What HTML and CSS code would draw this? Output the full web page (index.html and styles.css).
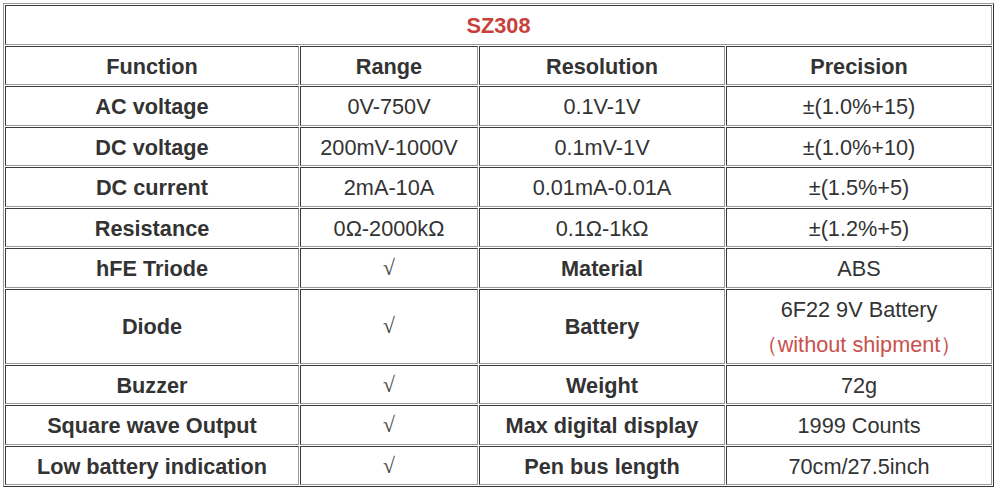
FILE: index.html
```html
<!DOCTYPE html>
<html>
<head>
<meta charset="utf-8">
<link rel="stylesheet" href="styles.css">
</head>
<body>
<table class="spec">
  <colgroup>
    <col class="c1"><col class="c2"><col class="c3"><col class="c4">
  </colgroup>
  <tr><td colspan="4" class="title">SZ308</td></tr>
  <tr><td class="b">Function</td><td class="b">Range</td><td class="b">Resolution</td><td class="b">Precision</td></tr>
  <tr><td class="b">AC voltage</td><td>0V-750V</td><td>0.1V-1V</td><td>±(1.0%+15)</td></tr>
  <tr><td class="b">DC voltage</td><td>200mV-1000V</td><td>0.1mV-1V</td><td>±(1.0%+10)</td></tr>
  <tr><td class="b">DC current</td><td>2mA-10A</td><td>0.01mA-0.01A</td><td>±(1.5%+5)</td></tr>
  <tr><td class="b">Resistance</td><td>0Ω-2000kΩ</td><td>0.1Ω-1kΩ</td><td>±(1.2%+5)</td></tr>
  <tr><td class="b">hFE Triode</td><td class="chk">√</td><td class="b">Material</td><td>ABS</td></tr>
  <tr><td class="b">Diode</td><td class="chk">√</td><td class="b">Battery</td><td>6F22 9V Battery<br><span class="red">（without shipment）</span></td></tr>
  <tr><td class="b">Buzzer</td><td class="chk">√</td><td class="b">Weight</td><td>72g</td></tr>
  <tr><td class="b">Square wave Output</td><td class="chk">√</td><td class="b">Max digital display</td><td>1999 Counts</td></tr>
  <tr><td class="b">Low battery indication</td><td class="chk">√</td><td class="b">Pen bus length</td><td>70cm/27.5inch</td></tr>
</table>
</body>
</html>
```

FILE: styles.css
```css
html, body {
  margin: 0;
  padding: 0;
  background: #ffffff;
}
body {
  padding: 3px 0 0 3px;
  font-family: "Liberation Sans", Arial, sans-serif;
  color: #333333;
}
.spec {
  table-layout: fixed;
  border-collapse: separate;
  border-spacing: 1px;
  border-top: 1px solid #9a9a9a;
  border-left: 1px solid #9a9a9a;
  border-right: 1px solid #333333;
  border-bottom: 1px solid #333333;
  width: 991px;
}
.c1 { width: 294px; }
.c2 { width: 178px; }
.c3 { width: 246px; }
.c4 { width: 266px; }
.spec td {
  border-top: 1px solid #3a3a3a;
  border-left: 1px solid #3a3a3a;
  border-right: 1px solid #9a9a9a;
  border-bottom: 1px solid #9a9a9a;
  padding: 2px 1px 0;
  text-align: center;
  vertical-align: middle;
  font-size: 21.7px;
  line-height: 35.5px;
  white-space: nowrap;
}
.spec td.b {
  font-weight: bold;
}
.spec td.title {
  font-weight: bold;
  color: #c9413b;
}
.spec td.chk {
  font-family: "Liberation Serif", serif;
  color: #444444;
}
.red {
  color: #c9504c;
}
```
